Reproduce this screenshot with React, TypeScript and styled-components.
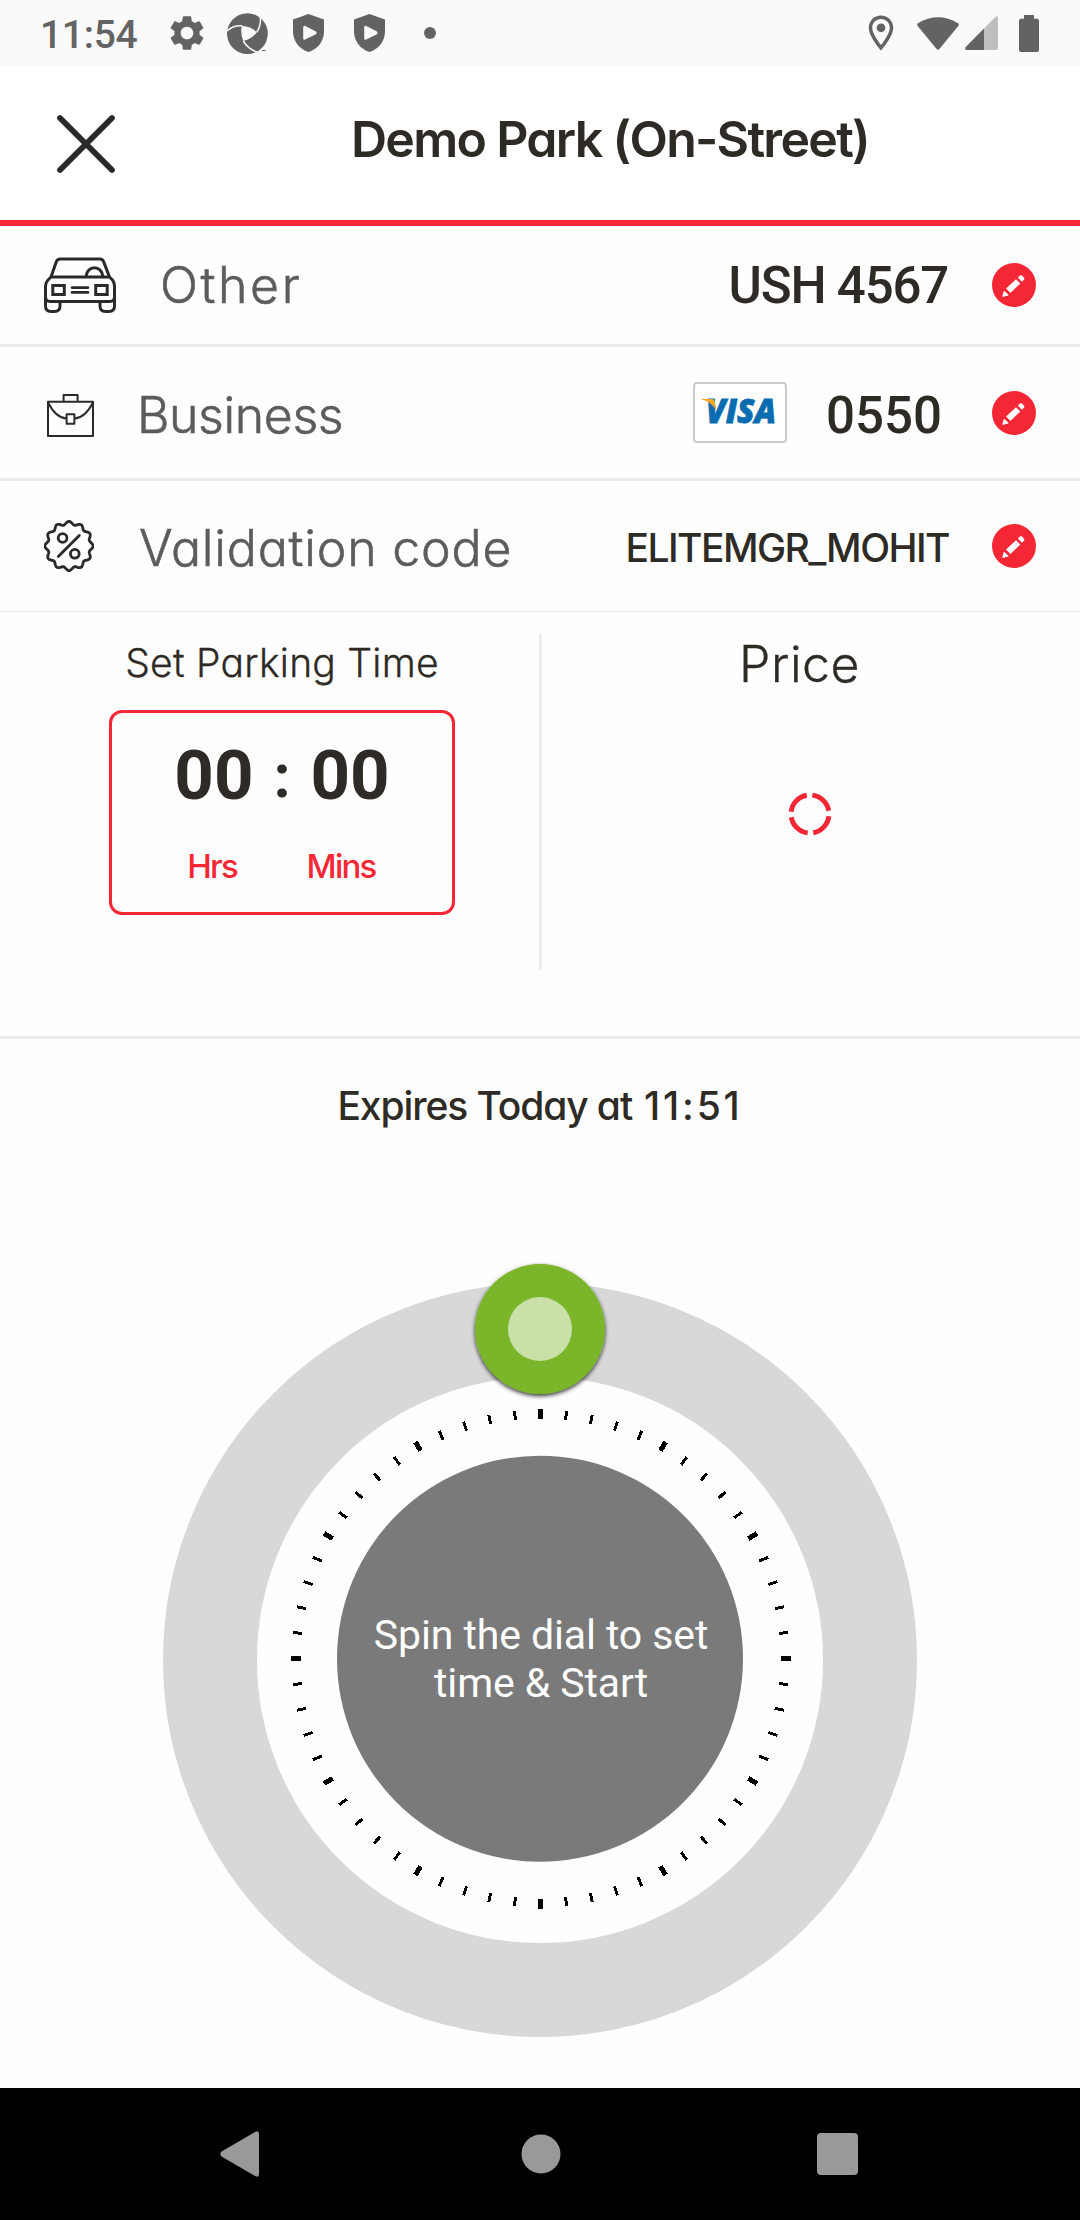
import React from "react";
import styled, { createGlobalStyle } from "styled-components";
import { MdSettings, MdOutlineLocationOn } from "react-icons/md";

const RED = "#f62735";
const INK = "#2e2a25";
const LINE = "#ececec";
const GREY = "#636363";

const GlobalStyle = createGlobalStyle`
  *, *::before, *::after { box-sizing: border-box; }
  body { margin: 0; background: #fefefe; }
  svg { display: block; flex: none; }
`;

const Screen = styled.div`
  width: 1080px;
  height: 2220px;
  display: flex;
  flex-direction: column;
  background: #fefefe;
  color: ${INK};
  font-family: Inter, "Liberation Sans", sans-serif;
  font-feature-settings: "cv11";
  white-space: nowrap;
`;

/* ---------- status bar ---------- */

const StatusBar = styled.div`
  height: 66px;
  flex: none;
  display: flex;
  align-items: center;
  justify-content: space-between;
  padding: 0 41px 0 40px;
  background: #fafafa;
  color: ${GREY};
`;

const StatusGroup = styled.div`
  display: flex;
  align-items: center;
`;

const StatusItem = styled.span<{ $gap: number }>`
  display: flex;
  margin-left: ${(p) => p.$gap}px;
`;

const Clock = styled.span`
  width: 99px;
  padding-top: 3px;
  font: 500 39px/46px Roboto, sans-serif;
  letter-spacing: -0.3px;
`;

const Dot = styled.i`
  width: 12px;
  height: 12px;
  border-radius: 50%;
  background: ${GREY};
`;

/* ---------- header ---------- */

const Header = styled.header`
  height: 160px;
  flex: none;
  display: flex;
  align-items: center;
  border-bottom: 6px solid ${RED};
  background: #fff;
`;

const CloseButton = styled.button`
  width: 140px;
  padding: 2px 0 0 56px;
  border: 0;
  background: none;
`;

const Title = styled.h1`
  flex: 1;
  margin: 0;
  padding-bottom: 8px;
  text-align: center;
  font-size: 50px;
  line-height: 60px;
  font-weight: 600;
  letter-spacing: -1.7px;
`;

/* ---------- detail rows ---------- */

const Row = styled.section<{ $height: number; $rule: number }>`
  height: ${(p) => p.$height}px;
  flex: none;
  display: flex;
  align-items: center;
  padding: 0 44px;
  border-bottom: ${(p) => p.$rule}px solid ${LINE};
`;

const RowIcon = styled.span<{ $width: number; $inset?: number; $drop?: number }>`
  width: ${(p) => p.$width}px;
  padding-left: ${(p) => p.$inset ?? 0}px;
  padding-top: ${(p) => p.$drop ?? 0}px;
`;

const Label = styled.span<{ $spacing?: number; $drop?: number }>`
  flex: 1;
  padding-top: ${(p) => p.$drop ?? 0}px;
  color: #5c5c5c;
  font-size: 50px;
  line-height: 60px;
  font-weight: 300;
  -webkit-text-stroke: 0.6px currentColor;
  letter-spacing: ${(p) => p.$spacing ?? 0}px;
`;

const Value = styled.span<{ $drop?: number }>`
  padding-top: ${(p) => p.$drop ?? 0}px;
  font: 500 51px/60px Roboto, sans-serif;
`;

const Plate = styled(Value)`
  letter-spacing: -1.2px;
  margin-right: 44px;
`;

const CardNumber = styled(Value)`
  margin: 0 50px 0 39px;
`;

const Code = styled.span`
  padding-top: 3px;
  margin-right: 43px;
  font-size: 39px;
  line-height: 48px;
  font-weight: 500;
  letter-spacing: -1.55px;
`;

const CardLogo = styled.span`
  width: 94px;
  height: 61px;
  border: 2px solid #cbcbcb;
  border-radius: 4px;
  background: #fff;
`;

const EditButton = styled.button`
  width: 44px;
  height: 44px;
  padding: 0;
  border: 0;
  border-radius: 50%;
  background: ${RED};
`;

/* ---------- time and price ---------- */

const Summary = styled.section`
  height: 427px;
  flex: none;
  display: flex;
  border-bottom: 3px solid ${LINE};
`;

const Divider = styled.div`
  width: 3px;
  height: 336px;
  margin-top: 22px;
  background: ${LINE};
`;

const TimeColumn = styled.div`
  width: 539px;
  padding: 27px 0 0 25px;
  display: flex;
  flex-direction: column;
  align-items: center;
`;

const PriceColumn = styled.div`
  flex: 1;
  padding: 22px 3px 0 0;
  display: flex;
  flex-direction: column;
  align-items: center;
`;

const TimeHeading = styled.h2`
  margin: 0 0 23px;
  font-size: 39px;
  line-height: 48px;
  font-weight: 300;
  -webkit-text-stroke: 0.3px currentColor;
  letter-spacing: 0.25px;
`;

const PriceHeading = styled.h2`
  margin: 0 20px 97px 0;
  font-size: 50px;
  line-height: 60px;
  font-weight: 300;
  -webkit-text-stroke: 0.3px currentColor;
  letter-spacing: 0.5px;
`;

const TimeBox = styled.div`
  width: 346px;
  height: 205px;
  border: 3px solid ${RED};
  border-radius: 13px;
  padding-top: 23px;
`;

const Digits = styled.div`
  display: flex;
  justify-content: center;
  font: 700 69px/80px Roboto, sans-serif;
`;

const Colon = styled.span`
  width: 57px;
  text-align: center;
  font-size: 61px;
`;

const Units = styled.div`
  display: flex;
  gap: 49px;
  margin-top: 30px;
  padding-left: 60px;
  color: ${RED};
  font-size: 33px;
  line-height: 40px;
  font-weight: 500;
`;

const Unit = styled.span`
  width: 80px;
  text-align: center;
  letter-spacing: -1.8px;
`;

/* ---------- expiry and dial ---------- */

const Expiry = styled.p`
  margin: 43px 0 0;
  flex: none;
  display: flex;
  justify-content: center;
  gap: 12px;
  font-size: 39px;
  line-height: 48px;
  font-weight: 500;
  letter-spacing: -1.1px;
`;

const ExpiryTime = styled.span`
  letter-spacing: 2.8px;
`;

const Dial = styled.div`
  flex: 1;
  display: grid;
  justify-content: center;
  align-content: end;
  padding-bottom: 33px;
`;

const DialFace = styled.svg`
  grid-area: 1 / 1;
`;

const DialText = styled.p`
  grid-area: 1 / 1;
  place-self: center;
  margin: 8px 0 0 2px;
  z-index: 1;
  text-align: center;
  color: #fff;
  font: 400 41px/48px Roboto, sans-serif;
  letter-spacing: -0.1px;
`;

/* ---------- system navigation ---------- */

const NavBar = styled.nav`
  height: 132px;
  flex: none;
  display: flex;
  align-items: center;
  padding-left: 220px;
  background: #000;
`;

const NavItem = styled.span<{ $gap: number }>`
  margin-left: ${(p) => p.$gap}px;
`;

/* ---------- drawings ---------- */

const Swirl = () => (
  <svg width="41" height="41" viewBox="0 0 41 41" fill="none">
    <circle cx="20.4" cy="20.6" r="20.4" fill={GREY} />
    <path d="M15 12.7Q24 13.5 29.7 19.3Q25.5 25.5 16.3 28Q13 20 15 12.7Z" fill="#fafafa" />
    <path
      d="M0 18Q6 12 15 12.7M33.2 3.5Q34.5 12 29.7 19.3M30 39Q21 36 16.3 28"
      stroke="#fafafa"
      strokeWidth="1.5"
    />
    <path d="M30 41Q36 39 40 33V41Z" fill="#fafafa" />
    <path d="M35 37.6h3.6" stroke={GREY} strokeWidth="1" />
  </svg>
);

const Shield = () => (
  <svg width="31" height="38" viewBox="0 0 31 38">
    <path d="M15.5 0 31 5.5V17C31 27 25 35 15.5 38 6 35 0 27 0 17V5.5Z" fill={GREY} />
    <path d="M10.2 13.4Q10.2 11.2 12.2 12L23 17.6Q24.4 18.9 23 20.2L12.2 25.6Q10.2 26.4 10.2 24.4Z" fill="#fafafa" />
  </svg>
);

const Wifi = () => (
  <svg width="42" height="33" viewBox="0 0 42 33">
    <path d="M1 6.3Q21-5.6 41 6.3 42.4 7.3 41.3 9L22.6 31.8Q21 33.6 19.4 31.8L.7 9Q-.4 7.3 1 6.3Z" fill={GREY} />
  </svg>
);

const Signal = () => (
  <svg width="33" height="34" viewBox="0 0 33 34">
    <path d="M19 12.4 30.5.8Q33-.8 33 2V32Q33 34 31 34H19Z" fill="#bfbfbf" />
    <path d="M19 12.4V34H1.5Q-.8 33.6 .7 31Z" fill={GREY} />
  </svg>
);

const Battery = () => (
  <svg width="20" height="37" viewBox="0 0 20 37">
    <path d="M5 0H15V3.7H18Q20 3.7 20 5.7V35Q20 37 18 37H2Q0 37 0 35V5.7Q0 3.7 2 3.7H5Z" fill={GREY} />
  </svg>
);

const CloseIcon = () => (
  <svg width="60" height="60" viewBox="0 0 60 60" stroke="#2b2a29" strokeWidth="5.8" strokeLinecap="round">
    <path d="M4 4 56 56M56 4 4 56" />
  </svg>
);

const Car = () => (
  <svg width="72" height="56" viewBox="0 0 72 56" fill="none" stroke="#2b2a29" strokeWidth="3" strokeLinejoin="round">
    <path d="M7 20 12.4 4.6Q13.4 2 16 2H56Q58.6 2 59.6 4.6L65.5 20" />
    <path d="M7 20H65.5L68.5 23Q70.5 25.5 70.5 29V40Q70.5 44.4 66 44.4H6Q1.5 44.4 1.5 40V29Q1.5 25.5 4 23Z" />
    <path d="M1.5 38V49Q1.5 54.5 7 54.5H10.5Q16 54.5 16 49V44.4M56 44.4V49Q56 54.5 61.5 54.5H65Q70.5 54.5 70.5 49V38" />
    <path d="M42.3 20C42.3 7.5 58.6 7.5 58.6 20" />
    <path d="M8.8 28.5H20.3V37.5H8.8ZM51.7 28.5H63.2V37.5H51.7Z" strokeLinejoin="miter" />
    <path d="M28 30.6H44M28 35.4H44" strokeLinecap="round" strokeWidth="2.6" />
  </svg>
);

const Briefcase = () => (
  <svg width="47" height="43" viewBox="0 0 47 43" fill="none" stroke="#2b2a29" strokeWidth="2" strokeLinejoin="round">
    <path d="M1 7.8H46V42H1ZM16.6 7.8V1H30.6V7.8" />
    <path d="M1 8.5Q9 24 19.6 24.6M27.4 24.6Q38 24 46 8.5" />
    <path d="M19.6 20.3H27.4V29.7H19.6Z" />
  </svg>
);

const sealPath =
  Array.from({ length: 144 }, (_, i) => {
    const a = (i / 144) * Math.PI * 2;
    const r = 22.6 + 1.6 * Math.cos(12 * a);
    return `${i ? "L" : "M"}${(25 + r * Math.sin(a)).toFixed(2)} ${(26 - r * 1.02 * Math.cos(a)).toFixed(2)}`;
  }).join("") + "Z";

const PercentSeal = () => (
  <svg width="50" height="52" viewBox="0 0 50 52" fill="none" stroke="#2b2a29" strokeWidth="2.8">
    <path d={sealPath} />
    <circle cx="18.6" cy="18" r="4.4" />
    <circle cx="30.8" cy="33.8" r="4.4" />
    <path d="M35.3 15.5 14.3 36.4" strokeLinecap="round" />
  </svg>
);

const Edit = () => (
  <EditButton aria-label="Edit">
    <svg width="44" height="44" viewBox="0 0 44 44" fill="#fff">
      <path d="M10.8 33.4 12.2 28.2 16.2 32Z" stroke="#fff" strokeLinejoin="round" />
      <path d="M14 25.6 24 16.3 28.3 20.6 18.4 30Z" />
      <path d="M25.8 14.5 28 12.4Q29 11.6 30 12.6L32 14.7Q32.8 15.7 32 16.7L30 18.8Z" />
    </svg>
  </EditButton>
);

const Visa = () => (
  <CardLogo>
    <svg width="90" height="57" viewBox="0 0 90 57">
      <text
        x="11"
        y="39"
        textLength="70"
        lengthAdjust="spacingAndGlyphs"
        fill="#0a6cb0"
        stroke="#0a6cb0"
        strokeWidth="0.8"
        fontFamily="Open Sans"
        fontStyle="italic"
        fontWeight="800"
        fontSize="33"
      >
        VISA
      </text>
      <path d="M7 15H17Q19 15 19.5 17L21.5 27Q16.5 17.5 7 15.8Z" fill="#f6a623" />
    </svg>
  </CardLogo>
);

const Spinner = () => (
  <svg width="46" height="46" viewBox="-23 -23 46 46">
    <circle
      r="19"
      fill="none"
      stroke={RED}
      strokeWidth="5"
      pathLength="360"
      strokeDasharray="73 17"
      transform="rotate(7)"
    />
  </svg>
);

const ticks = Array.from({ length: 60 }, (_, i) => i);

const Face = () => (
  <DialFace width="780" height="800" viewBox="0 0 780 800">
    <defs>
      <filter id="knobShadow" x="-20%" y="-20%" width="140%" height="140%">
        <feDropShadow dx="0" dy="2" stdDeviation="2" floodColor="#000" floodOpacity="0.8" />
      </filter>
    </defs>
    <circle cx="390" cy="405" r="330" fill="none" stroke="#d8d8d8" strokeWidth="94" />
    <circle cx="390" cy="403.7" r="203" fill="#7a7a7a" />
    <g transform="translate(390.5 403.5)" stroke="#000" shapeRendering="crispEdges">
      {ticks.map((i) => (
        <line
          key={i}
          y1={i % 5 ? -239.5 : -240}
          y2={i % 5 ? -249 : -250}
          strokeWidth={i % 5 ? 3 : 5}
          transform={`rotate(${i * 6})`}
        />
      ))}
    </g>
    <circle cx="390" cy="74" r="65" fill="#7ab52a" filter="url(#knobShadow)" />
    <circle cx="390" cy="74" r="32" fill="#c9e1a9" />
  </DialFace>
);

export default function App() {
  return (
    <Screen>
      <GlobalStyle />
      <StatusBar>
        <StatusGroup>
          <Clock>11:54</Clock>
          <StatusItem $gap={26.5}><MdSettings size={42} /></StatusItem>
          <StatusItem $gap={19.5}><Swirl /></StatusItem>
          <StatusItem $gap={25}><Shield /></StatusItem>
          <StatusItem $gap={30}><Shield /></StatusItem>
          <StatusItem $gap={39}><Dot /></StatusItem>
        </StatusGroup>
        <StatusGroup>
          <StatusItem $gap={0}><MdOutlineLocationOn size={42} /></StatusItem>
          <StatusItem $gap={15}><Wifi /></StatusItem>
          <StatusItem $gap={6}><Signal /></StatusItem>
          <StatusItem $gap={21}><Battery /></StatusItem>
        </StatusGroup>
      </StatusBar>

      <Header>
        <CloseButton aria-label="Close"><CloseIcon /></CloseButton>
        <Title>Demo Park (On-Street)</Title>
      </Header>

      <Row $height={121} $rule={3}>
        <RowIcon $width={116}><Car /></RowIcon>
        <Label $spacing={2.6}>Other</Label>
        <Plate $drop={1}>USH 4567</Plate>
        <Edit />
      </Row>
      <Row $height={134} $rule={3}>
        <RowIcon $width={93} $inset={3} $drop={5}><Briefcase /></RowIcon>
        <Label $spacing={-0.4} $drop={5}>Business</Label>
        <Visa />
        <CardNumber $drop={6}>0550</CardNumber>
        <Edit />
      </Row>
      <Row $height={131} $rule={1}>
        <RowIcon $width={95}><PercentSeal /></RowIcon>
        <Label $spacing={0.8} $drop={4}>Validation code</Label>
        <Code>ELITEMGR_MOHIT</Code>
        <Edit />
      </Row>

      <Summary>
        <TimeColumn>
          <TimeHeading>Set Parking Time</TimeHeading>
          <TimeBox>
            <Digits>
              <span>00</span>
              <Colon>:</Colon>
              <span>00</span>
            </Digits>
            <Units>
              <Unit>Hrs</Unit>
              <Unit>Mins</Unit>
            </Units>
          </TimeBox>
        </TimeColumn>
        <Divider />
        <PriceColumn>
          <PriceHeading>Price</PriceHeading>
          <Spinner />
        </PriceColumn>
      </Summary>

      <Expiry>
        <span>Expires Today at</span>
        <ExpiryTime>11:51</ExpiryTime>
      </Expiry>

      <Dial>
        <Face />
        <DialText>
          Spin the dial to set
          <br />
          time &amp; Start
        </DialText>
      </Dial>

      <NavBar>
        <NavItem $gap={0}>
          <svg width="39" height="46" viewBox="0 0 39 46">
            <path d="M35.5 .8Q39-.8 39 3V43Q39 46.8 35.5 45.2L1.5 25.5Q-.8 23 1.5 20.5Z" fill="#999" />
          </svg>
        </NavItem>
        <NavItem $gap={262}>
          <svg width="40" height="40" viewBox="0 0 40 40">
            <circle cx="20" cy="20" r="19.5" fill="#999" />
          </svg>
        </NavItem>
        <NavItem $gap={256}>
          <svg width="41" height="42" viewBox="0 0 41 42">
            <rect width="41" height="42" rx="4" fill="#999" />
          </svg>
        </NavItem>
      </NavBar>
    </Screen>
  );
}
